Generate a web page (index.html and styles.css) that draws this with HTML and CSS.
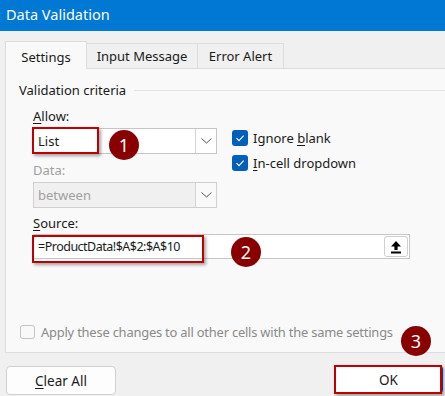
FILE: index.html
```html
<!DOCTYPE html>
<html>
<head>
<meta charset="utf-8">
<title>Data Validation</title>
<link rel="stylesheet" href="styles.css">
</head>
<body>
<div class="dialog">
  <div class="titlebar">Data Validation</div>
  <div class="tabs">
    <div class="tab active tab-settings">Settings</div>
    <div class="tab tab-input">Input Message</div>
    <div class="tab tab-error">Error Alert</div>
  </div>
  <div class="panel">
    <div class="group-title"><span>Validation criteria</span><span class="rule"></span></div>
    <div class="criteria">
      <div class="left">
        <div class="label label-allow"><u>A</u>llow:</div>
        <div class="select">
          <span class="value">List</span>
          <span class="dd-btn"><svg width="11" height="6" viewBox="0 0 11 6"><path d="M0.5 0.5 L5.5 5 L10.5 0.5" fill="none" stroke="#555" stroke-width="1"/></svg></span>
          <span class="highlight hl-list"></span>
          <span class="badge badge-1">1</span>
        </div>
        <div class="label label-data disabled">Data:</div>
        <div class="select select-disabled">
          <span class="value">between</span>
          <span class="dd-btn"><svg width="11" height="6" viewBox="0 0 11 6"><path d="M0.5 0.5 L5.5 5 L10.5 0.5" fill="none" stroke="#555" stroke-width="1"/></svg></span>
        </div>
      </div>
      <div class="checks">
        <div class="check-row">
          <span class="cb checked"><svg width="16" height="16" viewBox="0 0 16 16"><path d="M4.5 8.2 L7 10.6 L11.6 5.6" fill="none" stroke="#fff" stroke-width="1.1"/></svg></span>
          <span class="check-text">Ignore <u>b</u>lank</span>
        </div>
        <div class="check-row row-2">
          <span class="cb checked"><svg width="16" height="16" viewBox="0 0 16 16"><path d="M4.5 8.2 L7 10.6 L11.6 5.6" fill="none" stroke="#fff" stroke-width="1.1"/></svg></span>
          <span class="check-text"><u>I</u>n-cell dropdown</span>
        </div>
      </div>
    </div>
    <div class="label label-source"><u>S</u>ource:</div>
    <div class="source">
      <span class="value">=ProductData!$A$2:$A$10</span>
      <span class="upload"><svg width="12" height="14" viewBox="0 0 12 14"><path d="M6 1 L11 6.5 L7.6 6.5 L7.6 10 L4.4 10 L4.4 6.5 L1 6.5 Z" fill="#000"/><rect x="1" y="11.5" width="10" height="2" fill="#000"/></svg></span>
      <span class="highlight hl-source"></span>
      <span class="badge badge-2">2</span>
    </div>
    <div class="spacer"></div>
    <div class="apply">
      <span class="cb empty"></span>
      <span class="apply-text">Apply these changes to all other cells with the same settings</span>
    </div>
    <span class="badge badge-3">3</span>
  </div>
  <div class="buttons">
    <div class="btn btn-clear"><u>C</u>lear All</div>
    <div class="btn btn-ok">OK<span class="highlight hl-ok"></span></div>
  </div>
</div>
</body>
</html>
```

FILE: styles.css
```css
* { box-sizing: border-box; }
html, body {
  margin: 0;
  padding: 0;
}
body {
  width: 445px;
  height: 396px;
  overflow: hidden;
  background: #f0f0f0;
  font-family: "Noto Sans", "Open Sans", sans-serif;
  font-size: 13px;
  color: #1a1a1a;
}
u { text-decoration-thickness: 1px; text-underline-offset: 2px; }

.titlebar {
  height: 31px;
  background: #0078d4;
  color: #fff;
  font-size: 14.5px;
  line-height: 28px;
  padding-left: 6px;
}

.tabs {
  display: flex;
  align-items: flex-end;
  margin-top: 10px;
  padding-left: 5px;
  height: 27px;
  position: relative;
  z-index: 2;
}
.tab {
  height: 25px;
  border: 1px solid #dcdcdc;
  border-bottom: none;
  background: #f0f0f0;
  display: flex;
  align-items: center;
  justify-content: center;
  font-size: 13px;
  color: #1a1a1a;
}
.tab + .tab { border-left: none; }
.tab.active {
  height: 28px;
  margin-bottom: -1px;
  background: #f9f9f9;
  padding-top: 2px;
}
.tab-settings { width: 82px; }
.tab-input { width: 111px; border-left: 1px solid #dcdcdc; }
.tab-error { width: 86px; }

.panel {
  position: relative;
  margin-left: 5px;
  height: 285px;
  background: #f9f9f9;
  border: 1px solid #dcdcdc;
  border-right: none;
  display: flex;
  flex-direction: column;
  padding: 13px 0 12px 13px;
}

.group-title {
  display: flex;
  align-items: center;
  height: 16px;
  line-height: 16px;
  font-size: 13px;
  color: #1a1a1a;
}
.group-title .rule {
  flex: 1;
  height: 1px;
  background: #e3e3e3;
  margin-left: 8px;
}

.criteria {
  display: flex;
  padding-left: 14px;
}
.left { width: 184px; }

.label {
  height: 16px;
  line-height: 16px;
  font-size: 13px;
  color: #1a1a1a;
}
.label.disabled { color: #a0a0a0; }
.label-allow { margin-top: 10px; }
.label-data { margin-top: 8px; }
.label-source { margin-top: 7px; margin-left: 14px; }

.select {
  position: relative;
  margin-top: 4px;
  height: 26px;
  background: #fff;
  border: 1px solid #c6c6c6;
  display: flex;
  align-items: center;
  padding-left: 4px;
}
.select .value { flex: 1; font-size: 13px; color: #1a1a1a; }
.select-disabled { background: #f0f0f0; border-color: #cfcfcf; }
.select-disabled .value { color: #a0a0a0; }
.dd-btn {
  width: 21px;
  height: 24px;
  border-left: 1px solid #d4d4d4;
  background: #fff;
  display: flex;
  align-items: center;
  justify-content: center;
}
.select-disabled .dd-btn { background: #f9f9f9; }

.checks {
  margin-left: 15px;
  padding-top: 30px;
}
.check-row {
  display: flex;
  align-items: center;
  height: 16px;
  margin-top: 2px;
}
.check-row.row-2 { margin-top: 9px; }
.cb {
  width: 16px;
  height: 16px;
  border-radius: 3px;
  display: inline-flex;
  flex: none;
}
.cb.checked { background: #005fb8; }
.cb.empty {
  width: 15px;
  height: 14px;
  border: 1px solid #c4c4c4;
  background: #f9f9f9;
}
.check-text { margin-left: 5px; font-size: 13px; color: #1a1a1a; }

.source {
  position: relative;
  margin-top: 3px;
  margin-left: 14px;
  width: 377px;
  height: 25px;
  background: #fff;
  border: 1px solid #c6c6c6;
  display: flex;
  align-items: center;
  padding-left: 4px;
}
.source .value { flex: 1; font-size: 12.5px; letter-spacing: -0.5px; color: #1a1a1a; }
.upload {
  width: 24px;
  height: 21px;
  margin-right: 1px;
  border: 1px solid #cfcfcf;
  border-radius: 3px;
  background: #fff;
  display: flex;
  align-items: center;
  justify-content: center;
}

.spacer { flex: 1; }

.apply {
  display: flex;
  align-items: center;
  height: 16px;
  margin-left: 1px;
}
.apply-text { margin-left: 6px; font-size: 12.9px; letter-spacing: -0.2px; color: #8a8a8a; }

.highlight {
  position: absolute;
  border: 2px solid #c00000;
  box-shadow: 2px 2px 3px rgba(0,0,0,0.35);
  pointer-events: none;
}
.hl-list { left: -2px; top: -2px; width: 67px; height: 27px; }
.hl-source { left: -2px; top: 0; width: 172px; height: 28px; }
.hl-ok { left: -1px; top: -1px; width: 108px; height: 29px; }

.badge {
  position: absolute;
  width: 30px;
  height: 30px;
  border-radius: 50%;
  background: #880000;
  color: #fff;
  font-size: 18px;
  line-height: 30px;
  text-align: center;
  z-index: 3;
}
.badge-1 { left: 75px; top: 1px; }
.badge-2 { left: 197px; top: 2px; }
.badge-3 { left: 395px; top: 257px; }

.buttons {
  display: flex;
  justify-content: space-between;
  align-items: flex-start;
  margin-top: 12px;
  padding-left: 6px;
  padding-right: 2px;
}
.btn {
  position: relative;
  height: 29px;
  border: 1px solid #d0d0d0;
  border-radius: 4px;
  background: #fdfdfd;
  display: flex;
  align-items: center;
  justify-content: center;
  font-size: 13.5px;
  color: #1a1a1a;
}
.btn-clear { width: 110px; margin-top: 1px; }
.btn-ok { width: 109px; border-color: #005fb8; background: #fff; }
```
